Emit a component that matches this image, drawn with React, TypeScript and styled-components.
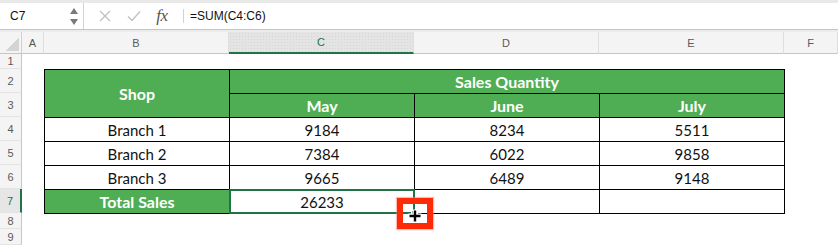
import React from 'react';
import styled, { createGlobalStyle, css } from 'styled-components';

const GREEN = '#4fae54';
const SEL = '#217346';

const GlobalStyle = createGlobalStyle`
  html, body { margin: 0; padding: 0; background: #fff; }
  body { font-family: "Liberation Sans", Arial, sans-serif; overflow: hidden; }
`;

const Page = styled.div`
  width: 838px;
  height: 246px;
  overflow: hidden;
  background: #fff;
`;

/* ---------- formula bar ---------- */

const FormulaBar = styled.div`
  height: 30px;
  box-sizing: border-box;
  border-top: 3px solid #e9e9e9;
  border-bottom: 1px solid #c4c4c4;
  display: flex;
  align-items: stretch;
  background: #fff;
`;

const NameBox = styled.div`
  width: 84px;
  box-sizing: border-box;
  border-right: 1px solid #d3d3d3;
  display: flex;
  align-items: center;
  justify-content: space-between;
  padding: 0 5px 0 10px;
  font-size: 12px;
  color: #111;
`;

const Spinner = styled.div`
  display: flex;
  flex-direction: column;
  gap: 5px;
  align-items: center;
`;

const Arrow = styled.div<{ $up?: boolean }>`
  width: 0;
  height: 0;
  border-left: 4px solid transparent;
  border-right: 4px solid transparent;
  ${(p) =>
    p.$up
      ? css`border-bottom: 6px solid #7a7a7a;`
      : css`border-top: 6px solid #7a7a7a;`}
`;

const ToolSlot = styled.div<{ $w: number }>`
  width: ${(p) => p.$w}px;
  display: flex;
  align-items: center;
  justify-content: center;
`;

const Fx = styled.span`
  font-family: "Liberation Serif", "Times New Roman", serif;
  font-style: italic;
  font-size: 17px;
  color: #555;
  letter-spacing: -0.5px;
`;

const BarDivider = styled.div`
  width: 1px;
  margin: 6px 0;
  background: #d3d3d3;
`;

const Formula = styled.div`
  display: flex;
  align-items: center;
  padding-left: 6px;
  font-size: 12px;
  color: #111;
`;

const Gap = styled.div`
  height: 2px;
  background: #ececec;
`;

/* ---------- sheet ---------- */

const Sheet = styled.div`
  display: grid;
  grid-template-columns: 22px 22px 185px 185px 185px 185px 1fr;
  grid-template-rows: 22px 15px repeat(6, 24px) 16px 16px;
`;

const Corner = styled.div`
  grid-row: 1;
  grid-column: 1;
  background: #f4f4f4;
  border-right: 1px solid #d0d0d0;
  border-bottom: 1px solid #c6c6c6;
  box-sizing: border-box;
  display: flex;
  align-items: flex-end;
  justify-content: flex-end;
  padding: 0 2px 2px 0;
`;

const CornerMark = styled.div`
  width: 13px;
  height: 13px;
  background: linear-gradient(to top left, #d4d4d4 50%, transparent 51%);
`;

const ColHead = styled.div<{ $active?: boolean }>`
  grid-row: 1;
  box-sizing: border-box;
  display: flex;
  align-items: center;
  justify-content: center;
  font-size: 11px;
  color: #5a5a5a;
  background: #f4f4f4;
  border-right: 1px solid #dedede;
  border-bottom: 1px solid #c6c6c6;
  ${(p) =>
    p.$active &&
    css`
      color: ${SEL};
      background-color: #e4e4e4;
      background-image: radial-gradient(#d6d6d6 0.6px, transparent 0.8px);
      background-size: 3px 3px;
      border-bottom: 2px solid ${SEL};
    `}
`;

const RowHead = styled.div<{ $active?: boolean }>`
  grid-column: 1;
  box-sizing: border-box;
  display: flex;
  align-items: center;
  justify-content: center;
  font-size: 11px;
  color: #5a5a5a;
  background: #f4f4f4;
  border-right: 1px solid #c6c6c6;
  border-bottom: 1px solid #e3e3e3;
  ${(p) =>
    p.$active &&
    css`
      color: ${SEL};
      background: #e6e6e6;
      border-right: 2px solid ${SEL};
    `}
`;

const DataTable = styled.div`
  grid-column: 3 / 7;
  grid-row: 3 / 9;
  justify-self: start;
  align-self: start;
  display: grid;
  grid-template-columns: repeat(4, 184px);
  grid-template-rows: repeat(6, 23px);
  gap: 1px;
  padding: 1px;
  background: #000;
  font-family: Lato, "Open Sans", sans-serif;
  font-size: 15px;
`;

const Cell = styled.div<{ $head?: boolean; $selected?: boolean }>`
  display: flex;
  align-items: center;
  justify-content: center;
  background: ${(p) => (p.$head ? GREEN : '#fff')};
  color: ${(p) => (p.$head ? '#fff' : '#111')};
  font-weight: ${(p) => (p.$head ? 700 : 400)};
  font-size: ${(p) => (p.$head ? '16px' : '15px')};
  ${(p) =>
    p.$selected &&
    css`
      position: relative;
      &::after {
        content: '';
        position: absolute;
        inset: -1px;
        border: 2px solid ${SEL};
        pointer-events: none;
      }
    `}
`;

const FillHandle = styled.div`
  position: absolute;
  right: -4px;
  bottom: -4px;
  width: 5px;
  height: 5px;
  background: ${SEL};
  border: 1px solid #fff;
  z-index: 2;
`;

const Highlight = styled.div`
  position: absolute;
  left: 167px;
  top: 8px;
  width: 36px;
  height: 31px;
  box-sizing: border-box;
  border: 6px solid #ff2b06;
  box-shadow: 0 0 1px 1px rgba(255, 120, 100, 0.5);
  z-index: 3;
`;

const Cursor = styled.svg`
  position: absolute;
  left: 177px;
  top: 18px;
  z-index: 4;
`;

const XIcon = () => (
  <svg width="12" height="12" viewBox="0 0 12 12">
    <path d="M1 1 L11 11 M11 1 L1 11" stroke="#c2c2c2" strokeWidth="1.4" fill="none" />
  </svg>
);

const CheckIcon = () => (
  <svg width="14" height="12" viewBox="0 0 14 12">
    <path d="M1 6.5 L5 10.5 L13 1.5" stroke="#c2c2c2" strokeWidth="1.4" fill="none" />
  </svg>
);

const cols = ['A', 'B', 'C', 'D', 'E', 'F'];
const rows = [1, 2, 3, 4, 5, 6, 7, 8, 9];

const branches = [
  ['Branch 1', '9184', '8234', '5511'],
  ['Branch 2', '7384', '6022', '9858'],
  ['Branch 3', '9665', '6489', '9148'],
];

const App = () => {
  return (
    <Page>
      <GlobalStyle />
      <FormulaBar>
        <NameBox>
          <span>C7</span>
          <Spinner>
            <Arrow $up />
            <Arrow />
          </Spinner>
        </NameBox>
        <ToolSlot $w={42}>
          <XIcon />
        </ToolSlot>
        <ToolSlot $w={15}>
          <CheckIcon />
        </ToolSlot>
        <ToolSlot $w={42}>
          <Fx>fx</Fx>
        </ToolSlot>
        <BarDivider />
        <Formula>=SUM(C4:C6)</Formula>
      </FormulaBar>
      <Gap />
      <Sheet>
        <Corner>
          <CornerMark />
        </Corner>
        {cols.map((c) => (
          <ColHead key={c} $active={c === 'C'}>
            {c}
          </ColHead>
        ))}
        {rows.map((r) => (
          <RowHead key={r} $active={r === 7} style={{ gridRow: r + 1 }}>
            {r}
          </RowHead>
        ))}
        <DataTable>
          <Cell $head style={{ gridRow: '1 / 3' }}>Shop</Cell>
          <Cell $head style={{ gridColumn: '2 / 5' }}>Sales Quantity</Cell>
          <Cell $head>May</Cell>
          <Cell $head>June</Cell>
          <Cell $head>July</Cell>
          {branches.map((row) => row.map((v, i) => <Cell key={row[0] + i}>{v}</Cell>))}
          <Cell $head>Total Sales</Cell>
          <Cell $selected>
            26233
            <FillHandle />
            <Highlight />
            <Cursor width="16" height="16" viewBox="0 0 16 16">
              <path d="M8 1.5 V14.5 M1.5 8 H14.5" stroke="#fff" strokeWidth="5" />
              <path d="M8 2.5 V13.5 M2.5 8 H13.5" stroke="#000" strokeWidth="2.4" />
            </Cursor>
          </Cell>
          <Cell />
          <Cell />
        </DataTable>
      </Sheet>
    </Page>
  );
};

export default App;
